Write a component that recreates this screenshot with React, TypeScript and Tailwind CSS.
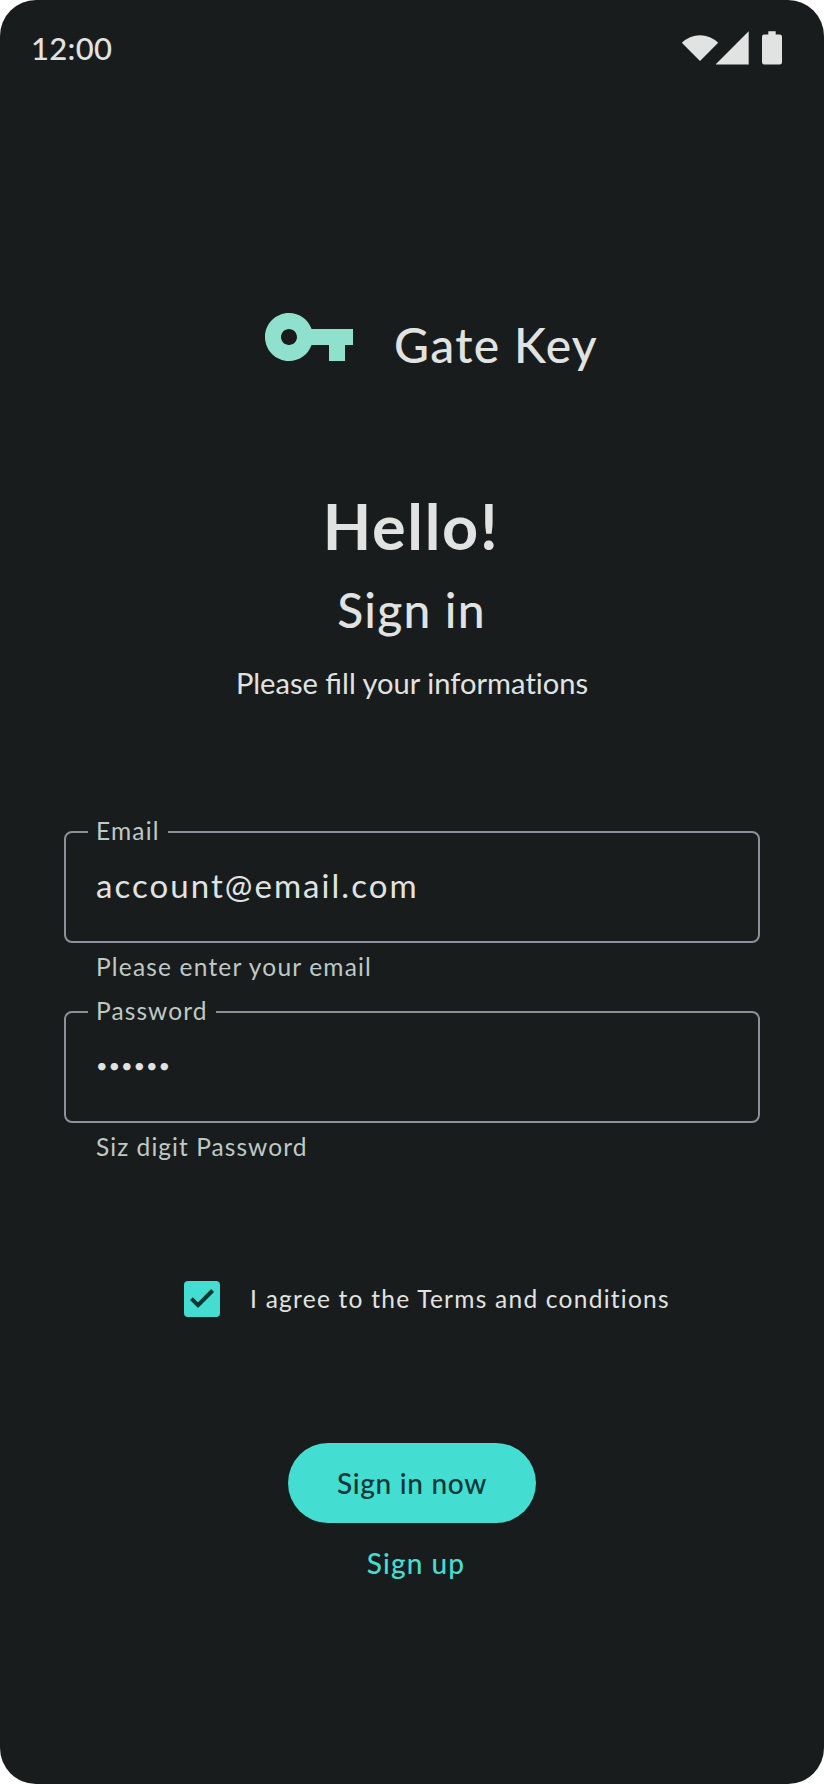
import type { ReactNode } from "react";

function StatusBar() {
  return (
    <header className="flex h-24 items-start justify-between pt-7 pl-[31px]">
      <span className="text-[31px] leading-10 font-medium tracking-[0.3px]">12:00</span>
      <svg className="h-[52px] w-[144px]" viewBox="680 28 144 52" fill="currentColor" aria-hidden="true">
        <path d="M700 61 681.8 42.8a25.8 25.8 0 0 1 36.4 0Z" />
        <path d="M716 64.5V64L748.7 31.3V64.5Z" />
        <path d="M768.3 31.3h7.4v3.2h4.1a2.2 2.2 0 0 1 2.2 2.2v25.6a2.2 2.2 0 0 1-2.2 2.2h-15.6a2.2 2.2 0 0 1-2.2-2.2V36.7a2.2 2.2 0 0 1 2.2-2.2h4.1Z" />
      </svg>
    </header>
  );
}

function Brand() {
  return (
    <div className="mt-[193px] flex h-24 pl-[261px]">
      <svg className="size-24 text-[#8fe0cc]" viewBox="0 0 24 24" fill="currentColor" aria-hidden="true">
        <path d="M12.65 10C11.83 7.67 9.61 6 7 6c-3.31 0-6 2.69-6 6s2.69 6 6 6c2.61 0 4.83-1.67 5.65-4H17v4h4v-4h2v-4H12.65zM7 14c-1.1 0-2-.9-2-2s.9-2 2-2 2 .9 2 2-.9 2-2 2z" />
      </svg>
      <p className="mt-7 ml-[37px] text-[48px] leading-[56px] font-medium tracking-[1.35px]">Gate Key</p>
    </div>
  );
}

type FieldProps = { label: string; labelClass: string; helper: string; helperClass: string; children: ReactNode };

function Field({ label, labelClass, helper, helperClass, children }: FieldProps) {
  return (
    <div className="h-[180px]">
      <div className="relative h-28 rounded-lg border-2 border-[#8e9099] pt-7 pl-[30px]">
        <label
          className={`absolute -top-[18px] left-[22px] bg-[#191c1c] pl-2 text-[24.5px] leading-8 text-[#bec9c6] ${labelClass}`}
        >
          {label}
        </label>
        {children}
      </div>
      <p className={`mt-2 pl-8 text-[24.5px] leading-8 text-[#bec9c6] ${helperClass}`}>{helper}</p>
    </div>
  );
}

export default function App() {
  return (
    <div className="bg-white">
      <main className="flex h-[1784px] w-[824px] flex-col overflow-hidden rounded-[36px] bg-[#191c1c] font-[Lato,sans-serif] text-[#e0e3e1]">
        <StatusBar />
        <Brand />

        <section className="mt-[103px] text-center">
          <h1 className="pr-0.5 text-[63px] leading-[76px] font-bold tracking-[1.7px]">Hello!</h1>
          <h2 className="mt-[18px] pr-px text-[48px] leading-[56px] font-medium tracking-[1.2px]">Sign in</h2>
          <p className="mt-[25px] text-[29.1px] leading-10">
            Please fill your informa<span className="[font-variant-ligatures:none]">ti</span>ons
          </p>
        </section>

        <form className="mt-[128px] flex flex-col">
          <div className="px-16">
            <Field
              label="Email"
              labelClass="w-20 tracking-[1.2px]"
              helper="Please enter your email"
              helperClass="tracking-[1.18px]"
            >
              <p className="text-[33px] leading-[48px] tracking-[2.05px]">account@email.com</p>
            </Field>
            <Field
              label="Password"
              labelClass="w-32 tracking-[1.1px]"
              helper="Siz digit Password"
              helperClass="tracking-[1.05px]"
            >
              <p className="text-[20px] leading-[48px] tracking-[0.9px]">••••••</p>
            </Field>
          </div>

          <label className="mt-[90px] flex h-9 items-start pl-[184px]">
            <span className="size-9 rounded bg-[#44ddd2]">
              <svg className="size-9 text-[#003734]" viewBox="0 0 36 36" fill="none" stroke="currentColor" strokeWidth="4" aria-hidden="true">
                <path d="M7.4 17.6 14 24.2 28.6 9.5" />
              </svg>
            </span>
            <span className="mt-0.5 ml-[30px] text-[24.5px] leading-8 tracking-[1.25px]">
              I agree to the Terms and conditions
            </span>
          </label>

          <div className="mt-[126px] flex flex-col items-center">
            <button
              type="button"
              className="h-20 w-[248px] rounded-full bg-[#44ddd2] text-[28px] leading-10 font-medium tracking-[0.7px] text-[#003734]"
            >
              Sign in now
            </button>
            <a className="mt-5 pl-2 text-[28px] leading-10 font-medium tracking-[1.1px] text-[#44ddd2]">Sign up</a>
          </div>
        </form>
      </main>
    </div>
  );
}
